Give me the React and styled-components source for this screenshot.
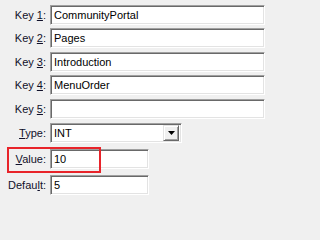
import React from 'react';
import styled, { createGlobalStyle } from 'styled-components';

const GlobalStyle = createGlobalStyle`
  html, body {
    margin: 0;
    padding: 0;
    background: #f0f0f0;
  }
  body {
    font-family: "Liberation Sans", Arial, sans-serif;
    font-size: 11px;
    color: #000;
  }
`;

const Form = styled.div`
  position: relative;
  display: flex;
  flex-direction: column;
  padding-top: 5px;
  width: 271px;
  height: 195px;
`;

const Row = styled.div`
  display: flex;
  align-items: center;
  height: 20px;
  margin-top: ${props => props.gap || 0}px;
`;

const Label = styled.label`
  width: 46px;
  margin-right: 4px;
  text-align: right;
  white-space: nowrap;
  color: #10102a;
`;

const Key = styled.span`
  text-decoration: underline;
`;

const Sunken = styled.div`
  box-sizing: border-box;
  height: 20px;
  width: ${props => props.width}px;
  background: #fff;
  border-top: 1px solid #a0a0a0;
  border-left: 1px solid #a0a0a0;
  border-bottom: 1px solid #fff;
  border-right: 1px solid #fff;
  box-shadow: inset 1px 1px 0 #696969, inset -1px -1px 0 #e3e3e3;
  display: flex;
  align-items: center;
  padding-left: 3px;
`;

const DropButton = styled.div`
  margin-left: auto;
  margin-right: 2px;
  box-sizing: border-box;
  width: 16px;
  height: 16px;
  background: #f0f0f0;
  border-top: 1px solid #e3e3e3;
  border-left: 1px solid #e3e3e3;
  border-right: 1px solid #696969;
  border-bottom: 1px solid #696969;
  box-shadow: inset 1px 1px 0 #fff, inset -1px -1px 0 #a0a0a0;
  display: flex;
  align-items: center;
  justify-content: center;
`;

const Highlight = styled.div`
  position: absolute;
  left: 7px;
  top: 147px;
  width: 90px;
  height: 22px;
  border: 2px solid #e8242a;
  pointer-events: none;
`;

const Field = ({ label, hot, gap, width = 215, value, children }) => {
  const i = label.indexOf(hot);
  return (
    <Row gap={gap}>
      <Label>
        {label.slice(0, i)}
        <Key>{hot}</Key>
        {label.slice(i + 1)}:
      </Label>
      <Sunken width={width}>
        {value}
        {children}
      </Sunken>
    </Row>
  );
};

const keys = ['CommunityPortal', 'Pages', 'Introduction', 'MenuOrder', ''];
const keyGaps = [0, 3, 4, 3, 4];

export default function App() {
  return (
    <>
      <GlobalStyle />
      <Form>
        {keys.map((k, i) => (
          <Field key={i} label={`Key ${i + 1}`} hot={`${i + 1}`} gap={keyGaps[i]} value={k} />
        ))}
        <Field label="Type" hot="T" gap={4} width={132} value="INT">
          <DropButton>
            <svg width="7" height="4" viewBox="0 0 7 4">
              <path d="M0 0h7L3.5 4z" fill="#000" />
            </svg>
          </DropButton>
        </Field>
        <Field label="Value" hot="V" gap={6} width={99} value="10" />
        <Field label="Default" hot="l" gap={6} width={99} value="5" />
        <Highlight />
      </Form>
    </>
  );
}
